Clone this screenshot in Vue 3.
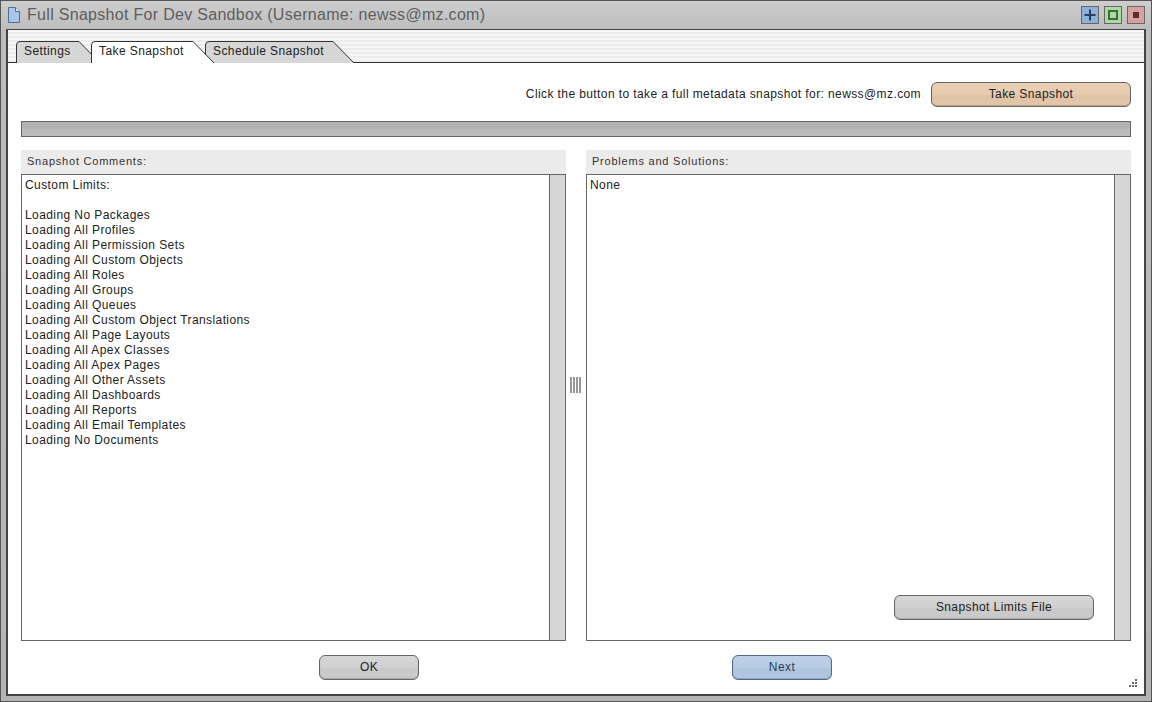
<script setup>
const tabs = [
  { label: 'Settings', width: 85, active: false },
  { label: 'Take Snapshot', width: 124, active: true },
  { label: 'Schedule Snapshot', width: 150, active: false },
];

const tabPath = (w) => `M0.5 23 V5 Q0.5 1.5 4 1.5 H${w - 22} L${w - 1} 23`;

const comments = [
  'Custom Limits:',
  '',
  'Loading No Packages',
  'Loading All Profiles',
  'Loading All Permission Sets',
  'Loading All Custom Objects',
  'Loading All Roles',
  'Loading All Groups',
  'Loading All Queues',
  'Loading All Custom Object Translations',
  'Loading All Page Layouts',
  'Loading All Apex Classes',
  'Loading All Apex Pages',
  'Loading All Other Assets',
  'Loading All Dashboards',
  'Loading All Reports',
  'Loading All Email Templates',
  'Loading No Documents',
];
</script>

<template>
  <div class="window">
    <header class="titlebar">
      <svg class="doc-icon" width="14" height="18" viewBox="0 0 14 18">
        <path d="M1.5 1.5 H8.5 L12.5 5.5 V16.5 H1.5 Z" fill="#a9c6e8" stroke="#4d6f96" />
        <path d="M8.5 1.5 V5.5 H12.5" fill="#e8f0fa" stroke="#4d6f96" />
      </svg>
      <span class="title">Full Snapshot For Dev Sandbox (Username: newss@mz.com)</span>
      <div class="win-buttons">
        <span class="win-btn win-btn--blue">
          <svg width="12" height="12" viewBox="0 0 12 12"><path d="M6 0.5 V11.5 M0.5 6 H11.5" stroke="#263f5e" stroke-width="2" /></svg>
        </span>
        <span class="win-btn win-btn--green">
          <svg width="12" height="12" viewBox="0 0 12 12"><rect x="2" y="2" width="8" height="8" fill="none" stroke="#3f6b3a" stroke-width="2" /></svg>
        </span>
        <span class="win-btn win-btn--red">
          <svg width="12" height="12" viewBox="0 0 12 12"><rect x="3" y="3" width="6" height="6" fill="#5a2a2c" /></svg>
        </span>
      </div>
    </header>

    <div class="body">
      <nav class="tabstrip">
        <div
          v-for="tab in tabs"
          :key="tab.label"
          class="tab"
          :class="{ 'tab--active': tab.active }"
          :style="{ width: tab.width + 'px' }"
        >
          <svg class="tab-shape" :width="tab.width" height="24" :viewBox="`0 0 ${tab.width} 24`">
            <path :d="tabPath(tab.width)" :fill="tab.active ? '#fff' : '#d6d6d6'" stroke="#333" />
          </svg>
          <span class="tab-label">{{ tab.label }}</span>
        </div>
      </nav>

      <main class="content">
        <div class="action-row">
          <span class="action-text">Click the button to take a full metadata snapshot for: newss@mz.com</span>
          <button class="btn btn--orange btn--take">Take Snapshot</button>
        </div>

        <div class="progress"></div>

        <div class="panels">
          <section class="panel">
            <div class="panel-head">Snapshot Comments:</div>
            <div class="textbox">
              <div class="textbox-text">
                <div v-for="(line, i) in comments" :key="i" class="line">{{ line }}</div>
              </div>
              <div class="scrollbar"></div>
            </div>
          </section>

          <div class="splitter">
            <svg width="11" height="16" viewBox="0 0 11 16">
              <path d="M1 0 V16 M4 0 V16 M7 0 V16 M10 0 V16" stroke="#777" stroke-width="1.5" />
            </svg>
          </div>

          <section class="panel">
            <div class="panel-head">Problems and Solutions:</div>
            <div class="textbox">
              <div class="textbox-text">
                <div class="line">None</div>
              </div>
              <div class="scrollbar"></div>
              <button class="btn btn--limits">Snapshot Limits File</button>
            </div>
          </section>
        </div>

        <footer class="footer">
          <button class="btn btn--ok">OK</button>
          <button class="btn btn--blue btn--next">Next</button>
        </footer>

        <svg class="resize-grip" width="8" height="8" viewBox="0 0 8 8">
          <path d="M6 0h2v2h-2z M3 3h2v2h-2z M6 3h2v2h-2z M0 6h2v2h-2z M3 6h2v2h-2z M6 6h2v2h-2z" fill="#666" />
        </svg>
      </main>
    </div>
  </div>
</template>

<style>
html,
body {
  margin: 0;
  background: #fff;
}
</style>

<style scoped>
.window {
  box-sizing: border-box;
  width: 1152px;
  height: 702px;
  display: flex;
  flex-direction: column;
  padding: 0 5px 5px;
  background: linear-gradient(180deg, #cdcdcd, #bdbdbd 30px, #b4b4b4);
  border: 1px solid #555;
  font-family: "Liberation Sans", Arial, sans-serif;
  font-size: 12px;
  letter-spacing: 0.41px;
  color: #222;
}

.titlebar {
  flex: none;
  height: 28px;
  display: flex;
  align-items: center;
  gap: 6px;
  padding: 0 0 0 1px;
}

.doc-icon {
  flex: none;
}

.title {
  font-size: 16px;
  letter-spacing: 0.3px;
  color: #5e5e5e;
}

.win-buttons {
  margin-left: auto;
  display: flex;
  gap: 5px;
  padding-right: 1px;
}

.win-btn {
  box-sizing: border-box;
  width: 18px;
  height: 18px;
  display: flex;
  align-items: center;
  justify-content: center;
  border: 1px solid #666;
}

.win-btn--blue {
  background: #8fb0d8;
}

.win-btn--green {
  background: #a9dca0;
}

.win-btn--red {
  background: #d9a0a0;
}

.body {
  flex: 1;
  min-height: 0;
  display: flex;
  flex-direction: column;
  background: #fff;
  border: 2px solid #444;
  border-top-width: 1px;
}

.tabstrip {
  flex: none;
  box-sizing: border-box;
  height: 33px;
  display: flex;
  align-items: flex-end;
  padding-left: 8px;
  border-bottom: 1px solid #333;
  background: repeating-linear-gradient(180deg, #f6f6f6 0, #f6f6f6 2px, #ececec 2px, #ececec 4px);
}

.tab {
  position: relative;
  height: 23px;
  margin-right: -10px;
  margin-bottom: -1px;
}

.tab--active {
  z-index: 1;
}

.tab-shape {
  position: absolute;
  left: 0;
  top: 0;
}

.tab-label {
  position: absolute;
  left: 8px;
  top: 4px;
  line-height: 15px;
  white-space: nowrap;
}

.content {
  position: relative;
  flex: 1;
  min-height: 0;
  display: flex;
  flex-direction: column;
  padding: 19px 13px 0;
}

.action-row {
  display: flex;
  justify-content: flex-end;
  align-items: center;
  gap: 10px;
  height: 25px;
}

.action-text {
  margin-bottom: 2px;
  letter-spacing: 0.4px;
}

.btn {
  box-sizing: border-box;
  height: 25px;
  padding: 0 0 2px;
  border: 1px solid #666;
  border-radius: 6px;
  font: inherit;
  letter-spacing: inherit;
  color: #222;
  background: linear-gradient(180deg, #d6d6d6, #d0d0d0 50%, #c9c9c9 55%, #cbcbcb);
  box-shadow: inset 0 -1px 1px rgba(0, 0, 0, 0.18);
}

.btn--orange {
  background: linear-gradient(180deg, #eacfb4, #e6cbae 50%, #e0c3a6 55%, #e3c7aa);
}

.btn--blue {
  color: #2c3e56;
  border-color: #4e6a8c;
  background: linear-gradient(180deg, #bcd0e8, #b7cbe4 50%, #aec4df 55%, #b2c7e1);
}

.btn--take {
  width: 200px;
}

.progress {
  flex: none;
  box-sizing: border-box;
  height: 16px;
  margin-top: 14px;
  border: 1px solid #666;
  background: linear-gradient(180deg, #b2b2b2 50%, #bcbcbc 50%);
}

.panels {
  flex: none;
  display: flex;
  height: 491px;
  margin-top: 13px;
}

.panel {
  flex: none;
  width: 545px;
  display: flex;
  flex-direction: column;
}

.panel-head {
  flex: none;
  height: 24px;
  line-height: 23px;
  padding-left: 6px;
  background: #ebebeb;
  font-size: 11px;
  letter-spacing: 0.78px;
  color: #333;
}

.textbox {
  position: relative;
  flex: 1;
  min-height: 0;
  display: flex;
  border: 1px solid #666;
}

.textbox-text {
  flex: 1;
  padding: 3px 3px 0;
}

.line {
  height: 15px;
  line-height: 15px;
  white-space: nowrap;
}

.scrollbar {
  flex: none;
  width: 15px;
  background: #d6d6d6;
  border-left: 1px solid #666;
}

.btn--limits {
  position: absolute;
  right: 36px;
  bottom: 20px;
  width: 200px;
}

.splitter {
  flex: none;
  box-sizing: border-box;
  width: 20px;
  display: flex;
  align-items: center;
  justify-content: center;
  padding: 0 1px 21px 0;
}

.footer {
  flex: none;
  display: flex;
  margin-top: 14px;
  padding-left: 298px;
  gap: 313px;
}

.btn--ok,
.btn--next {
  width: 100px;
}

.resize-grip {
  position: absolute;
  right: 7px;
  bottom: 7px;
}
</style>
